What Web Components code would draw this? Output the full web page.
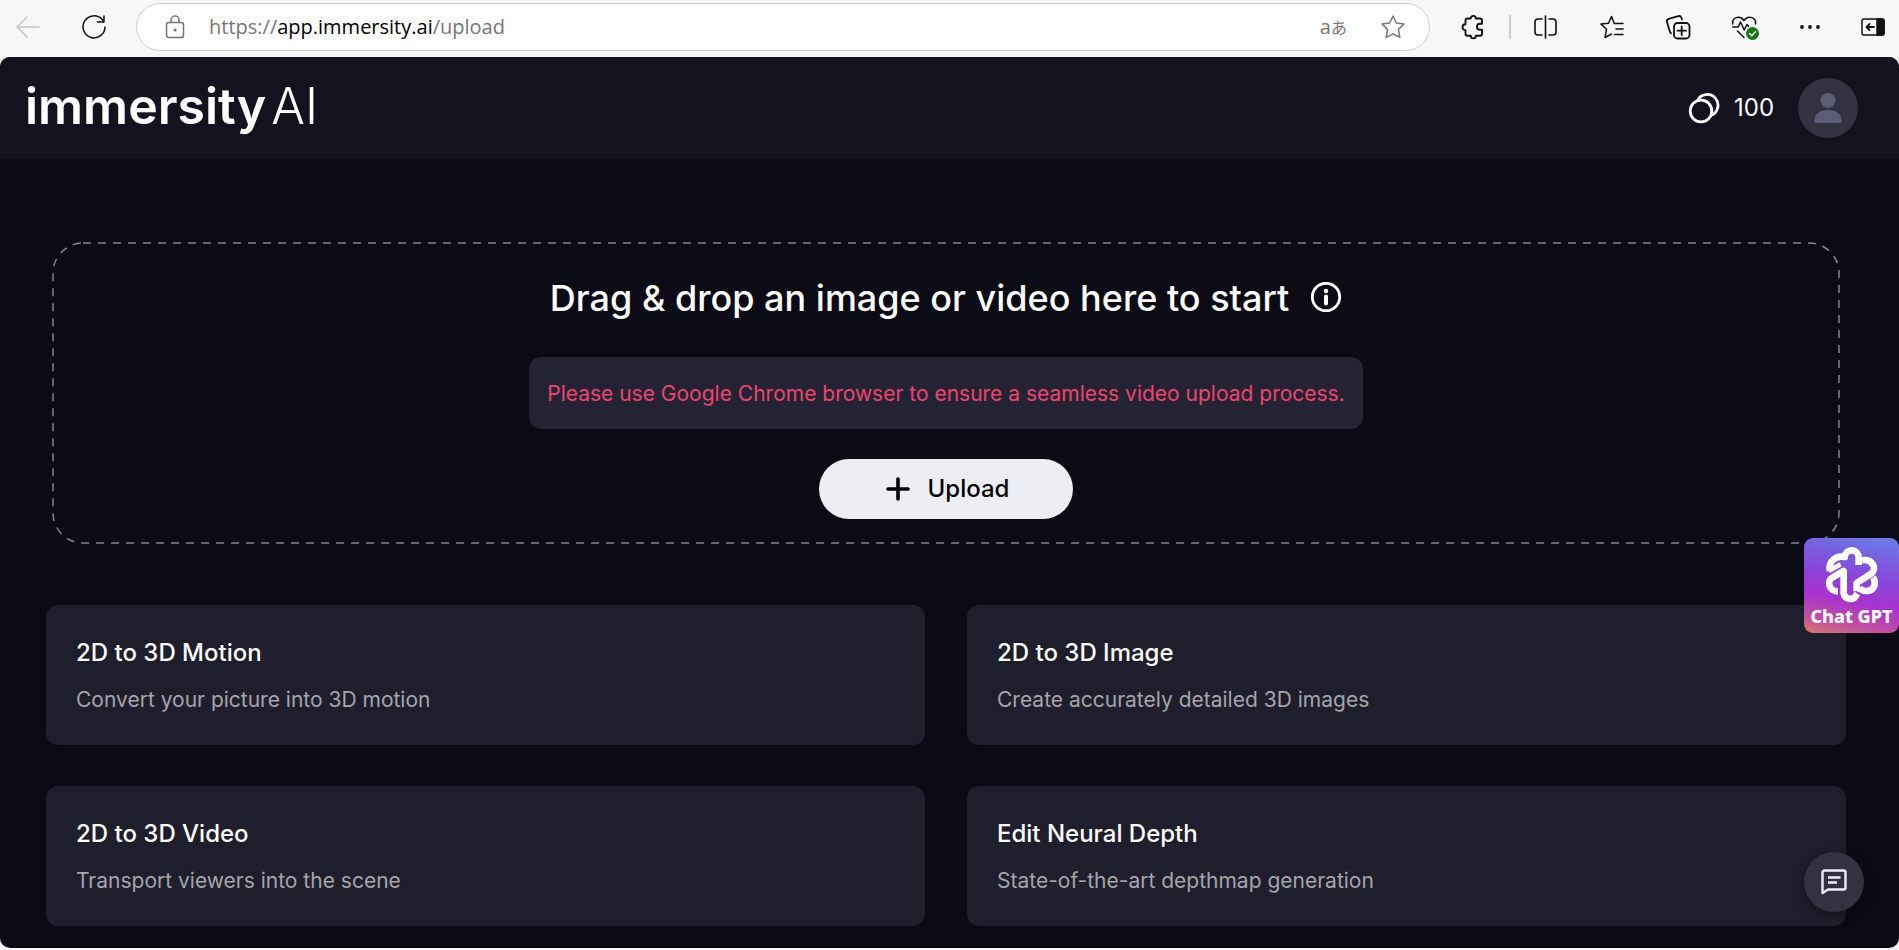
<!DOCTYPE html>
<html lang="en">
<head>
<meta charset="utf-8">
<title>Immersity AI</title>
<style>
  body { margin: 0; background: #f7f7f7; font-family: Inter, "Liberation Sans", sans-serif; color: #fff; }
</style>
</head>
<body>
<app-shell>
  <browser-bar slot="bar"></browser-bar>
  <site-header slot="header" credits="100"></site-header>
  <drop-zone></drop-zone>
  <feature-grid>
    <feature-card><span slot="title">2D to 3D Motion</span>Convert your picture into 3D motion</feature-card>
    <feature-card><span slot="title">2D to 3D Image</span>Create accurately detailed 3D images</feature-card>
    <feature-card><span slot="title">2D to 3D Video</span>Transport viewers into the scene</feature-card>
    <feature-card><span slot="title">Edit Neural Depth</span>State-of-the-art depthmap generation</feature-card>
  </feature-grid>
  <gpt-badge slot="float"></gpt-badge>
  <chat-fab slot="float"></chat-fab>
</app-shell>

<script>
const define = (name, html, ready) => {
  const tpl = document.createElement('template');
  tpl.innerHTML = html;
  customElements.define(name, class extends HTMLElement {
    constructor() {
      super();
      this.attachShadow({ mode: 'open' }).append(tpl.content.cloneNode(true));
    }
    connectedCallback() { if (ready) ready(this, this.shadowRoot); }
  });
};

define('app-shell', `
<style>
  :host { display: flex; flex-direction: column; min-height: 100vh; }
  .page { flex: 1; display: flex; flex-direction: column; background: #0b0b16; border-radius: 10px; overflow: hidden; margin-bottom: 2px; }
  main { display: flex; flex-direction: column; gap: 61px; padding: 83px 53px 22px 46px; }
</style>
<slot name="bar"></slot>
<div class="page">
  <slot name="header"></slot>
  <main><slot></slot></main>
</div>
<slot name="float"></slot>`);

define('browser-bar', `
<style>
  :host { display: flex; align-items: center; height: 57px; padding: 0 14px 0 16px; background: #f7f7f7; color: #111; box-sizing: border-box; }
  button { all: unset; display: block; width: 24px; height: 24px; cursor: pointer; }
  svg { display: block; width: 24px; height: 24px; fill: none; stroke: currentColor; stroke-width: 1.5; stroke-linecap: round; stroke-linejoin: round; overflow: visible; }
  .nav { display: flex; gap: 42px; margin-right: 30px; color: #111; margin-bottom: 4px; }
  .back { color: #c4c4c4; }
  .address { flex: 1; display: flex; align-items: center; height: 48px; box-sizing: border-box; border: 1px solid #cfcfcf; border-radius: 24px; background: #fff; padding: 0 24px 0 26px; color: #767676; margin-bottom: 4px; }
  .url { flex: 1; margin-left: 22px; font: 20px/28px "Open Sans", "Noto Sans", sans-serif; color: #767676; outline: none; }
  .url b { font-weight: 400; color: #000; }
  .translate { display: flex; align-items: center; width: auto; height: 28px; margin-right: 34px; font: 20px/28px "Open Sans", sans-serif; color: #767676; white-space: nowrap; }
  .translate small { font: 16px/28px "Noto Sans CJK JP", sans-serif; }
  .tools { display: flex; align-items: center; margin-left: 31px; margin-bottom: 4px; }
  .divider { width: 2px; height: 24px; margin: 0 23px 0 24px; background: #cfcfcf; }
  .group { display: flex; gap: 42px; margin-right: 39px; }
</style>
<div class="nav">
  <button class="back" aria-label="Back"><svg viewBox="0 0 24 24"><path d="M23 12H1M11 2 1 12l10 10"/></svg></button>
  <button aria-label="Refresh"><svg viewBox="0 0 24 24"><path d="M23 12A11 11 0 1 1 20 4.300L22 6.600M22 1v6h-6.500"/></svg></button>
</div>
<div class="address">
  <button aria-label="Site information"><svg viewBox="0 0 24 24"><rect x="3.500" y="7.500" width="17" height="15" rx="2.500"/><path d="M8 7.500V5a4 4 0 0 1 8 0v2.500"/><circle cx="12" cy="15" r=".8" fill="currentColor"/></svg></button>
  <div class="url" role="textbox" aria-label="Address" contenteditable="true" spellcheck="false">https://<b>app.immersity.ai</b>/upload</div>
  <button class="translate" aria-label="Translate">a<small>あ</small></button>
  <button aria-label="Add to favourites"><svg viewBox="0 0 24 24"><path d="m12 1 3.300 7 7.700 1-5.600 5.400 1.400 8L12 18.800l-6.800 3.600 1.400-8L1 9l7.700-1z"/></svg></button>
</div>
<div class="tools">
  <button aria-label="Extensions"><svg viewBox="0 0 24 24" style="stroke-width:1.900"><path d="M6 3.500h3.700a2.600 2.600 0 0 1 5.200 0H19a2 2 0 0 1 2 2v3.300h-2a3 3 0 0 0 0 6h2v4a2 2 0 0 1-2 2h-4.100a2.600 2.600 0 0 1-5.200 0H6.500a2 2 0 0 1-2-2v-3.600a3 3 0 0 1 0-6V5.500a2 2 0 0 1 2-2z"/></svg></button>
  <span class="divider"></span>
  <div class="group">
    <button aria-label="Split screen"><svg viewBox="0 0 24 24" style="stroke-width:1.600"><path d="M11.500 1v22M8 4H4a3 3 0 0 0-3 3v10a3 3 0 0 0 3 3h4M15 4h4a3 3 0 0 1 3 3v10a3 3 0 0 1-3 3h-4"/></svg></button>
    <button aria-label="Favourites"><svg viewBox="0 0 24 24"><path d="M15.500 8.500h-1.200L11.500 1.500 8.500 8.300l-7.500.8 5.500 5.200L5 22.500l6.500-3.500M15.500 8.500H23M16 14h7M14.500 19.500H23"/></svg></button>
    <button aria-label="Collections"><svg viewBox="0 0 24 24" style="stroke-width:1.800"><rect x="8" y="8" width="15.500" height="15.500" rx="3.500"/><path d="M15.700 11.500v8.500M11.500 15.700H20M16 4.500l-.6-1.700a2.600 2.600 0 0 0-3.200-1.600L2.800 3.800A2.600 2.600 0 0 0 1 7l2.800 9.500 1.200 1.800"/></svg></button>
    <button aria-label="Browser essentials"><svg viewBox="0 0 24 24"><path d="M.8 9C-.5 2 8 .2 12 5.500 16 .2 24.500 2 23.500 9M.8 12h5.500l2.200-5 3.700 8 2.800-5.500 1.500 2M5.500 16l6.500 6.500"/><circle cx="20.500" cy="18.500" r="6.500" fill="#107c10" stroke="none"/><path stroke="#fff" d="m17.500 18.500 2.300 2.200 3.800-4.200"/></svg></button>
    <button aria-label="Settings and more"><svg viewBox="0 0 24 24"><g fill="currentColor" stroke="none"><circle cx="4" cy="12" r="1.900"/><circle cx="12" cy="12" r="1.900"/><circle cx="20" cy="12" r="1.900"/></g></svg></button>
  </div>
  <button aria-label="Toggle sidebar"><svg viewBox="0 0 24 24"><rect x="1" y="4" width="22" height="16" rx="2"/><path fill="currentColor" d="M16 4h5a2 2 0 0 1 2 2v12a2 2 0 0 1-2 2h-5z"/><path stroke-width="1.800" d="M13 12H5.500M8.500 9l-3 3 3 3"/></svg></button>
</div>`);

define('site-header', `
<style>
  :host { display: flex; align-items: center; justify-content: space-between; height: 102px; box-sizing: border-box; padding: 0 41px 0 25px; background: #13121f; }
  .logo { display: flex; gap: 5px; color: #fff; text-decoration: none; font: 600 50px/56px Inter, sans-serif; margin-bottom: 4px; }
  .logo span { font-weight: 300; }
  .account { display: flex; align-items: center; }
  .coins { width: 32px; height: 32px; margin-right: 14px; }
  .credits { min-width: 45px; font: 24px/32px Inter, sans-serif; margin-right: 19px; }
  button { all: unset; display: block; width: 60px; height: 60px; border-radius: 50%; background: #343242; cursor: pointer; }
  svg { display: block; }
</style>
<a class="logo" href="#" aria-label="immersity AI">immersity <span>AI</span></a>
<div class="account">
  <svg class="coins" viewBox="0 0 32 32" fill="none" stroke="#fff" stroke-width="2.800"><circle cx="13" cy="19" r="10.800"/><path d="M9.500 8.500a10.800 10.800 0 1 1 13.200 15"/><path d="M9.500 8.500C19 5.500 26 14 23 23.500" stroke-width="2"/></svg>
  <span class="credits"></span>
  <button aria-label="Account"><svg viewBox="0 0 60 60" width="60" height="60" fill="#5a5d73"><circle cx="30" cy="22.500" r="7.500"/><path d="M16.500 45v-3c0-6 6-10 13.500-10s13.500 4 13.500 10v3z"/></svg></button>
</div>`, (el, root) => { root.querySelector('.credits').textContent = el.getAttribute('credits'); });

define('drop-zone', `
<style>
  :host { display: flex; flex-direction: column; align-items: center; position: relative; margin: 0 6px; padding: 36px 24px 25px; }
  .outline { position: absolute; inset: 1px; width: calc(100% - 2px); height: calc(100% - 2px); overflow: visible; pointer-events: none; }
  .heading { display: flex; align-items: center; gap: 21px; margin-bottom: 39px; }
  h1 { margin: 0; font: 500 36px/40px Inter, sans-serif; }
  .info { all: unset; display: block; cursor: pointer; }
  svg { display: block; }
  p { margin: 0 0 30px; padding: 23px 18px 21px; border-radius: 12px; background: #232334; color: #ef4470; font: 21px/28px Inter, sans-serif; }
  .upload { all: unset; display: flex; align-items: center; gap: 18px; box-sizing: border-box; height: 60px; padding: 0 64px 0 67px; border-radius: 30px; background: #edeef2; color: #000; font: 500 24px/32px Inter, sans-serif; cursor: pointer; }
</style>
<svg class="outline" fill="none" stroke="#858592" stroke-width="1.500"><rect x="0" y="0" width="100%" height="100%" rx="30" stroke-dasharray="8 7"/></svg>
<div class="heading">
  <h1>Drag &amp; drop an image or video here to start</h1>
  <button class="info" aria-label="Upload information"><svg width="32" height="32" viewBox="0 0 32 32"><circle cx="16" cy="15" r="13.700" fill="none" stroke="#fff" stroke-width="2.800"/><circle cx="16" cy="9" r="2.200" fill="#fff"/><path d="M16 14.500v7" stroke="#fff" stroke-width="4" stroke-linecap="round"/></svg></button>
</div>
<p>Please use Google Chrome browser to ensure a seamless video upload process.</p>
<button class="upload"><svg width="24" height="24" viewBox="0 0 24 24"><path d="M12 2v20M2 12h20" stroke="#000" stroke-width="3.600" stroke-linecap="round"/></svg>Upload</button>`);

define('feature-grid', `
<style>
  :host { display: grid; grid-template-columns: 1fr 1fr; gap: 41px 42px; }
</style>
<slot></slot>`);

define('feature-card', `
<style>
  :host { display: flex; flex-direction: column; gap: 17px; padding: 32px 30px 31px; border-radius: 12px; background: #1f1e2d; }
  h2 { margin: 0; font: 500 24px/32px Inter, sans-serif; }
  p { margin: 0; font: 21px/28px Inter, sans-serif; color: #a5a5ab; }
</style>
<h2><slot name="title"></slot></h2>
<p><slot></slot></p>`);

define('gpt-badge', `
<style>
  :host { position: fixed; right: 0; top: 538px; }
  button { all: unset; display: flex; flex-direction: column; align-items: center; box-sizing: border-box; width: 95px; height: 95px; padding-top: 7px; border-radius: 9px; cursor: pointer; color: #fff;
    background: linear-gradient(12deg, #d9786c 0%, #c450a0 15%, #a832cf 36%, #8a45da 58%, #7468e4 84%, #6a82ee 100%); }
  span { font: 800 18px/22px "Noto Sans", "Open Sans", sans-serif; white-space: nowrap; }
  svg { display: block; }
</style>
<button aria-label="Chat GPT">
  <svg width="56" height="60" viewBox="100 44 168 180" fill="none" stroke="#fff" stroke-width="20" stroke-linejoin="round">
    <path d="M204 104V82A21 21 0 0 0 162 80C138 74 112 92 117 122"/>
    <path d="M114 122 150 102" stroke-width="14"/>
    <path d="M214 90C242 84 262 112 242 130L198 158V183"/>
    <path d="M206 174C224 188 246 182 251 166 254 155 252 148 247 141"/>
    <path d="M142 183C116 184 106 152 126 141L159 122V188A20 20 0 0 0 196 196L200 190"/>
  </svg>
  <span>Chat GPT</span>
</button>`);

define('chat-fab', `
<style>
  :host { position: fixed; right: 35px; bottom: 38px; }
  button { all: unset; display: grid; place-items: center; width: 60px; height: 60px; border-radius: 50%; background: #343242; box-shadow: 0 4px 12px rgba(0, 0, 0, .4); cursor: pointer; }
  svg { display: block; }
</style>
<button aria-label="Open chat"><svg width="28" height="28" viewBox="0 0 28 28" fill="none" stroke="#eeeef4" stroke-width="2.400" stroke-linejoin="round"><path d="M2.500 25V4.500a2 2 0 0 1 2-2h19a2 2 0 0 1 2 2v15a2 2 0 0 1-2 2H8z"/><path d="M8 9.500h12.500M8 14.500h9"/></svg></button>`);
</script>
</body>
</html>
